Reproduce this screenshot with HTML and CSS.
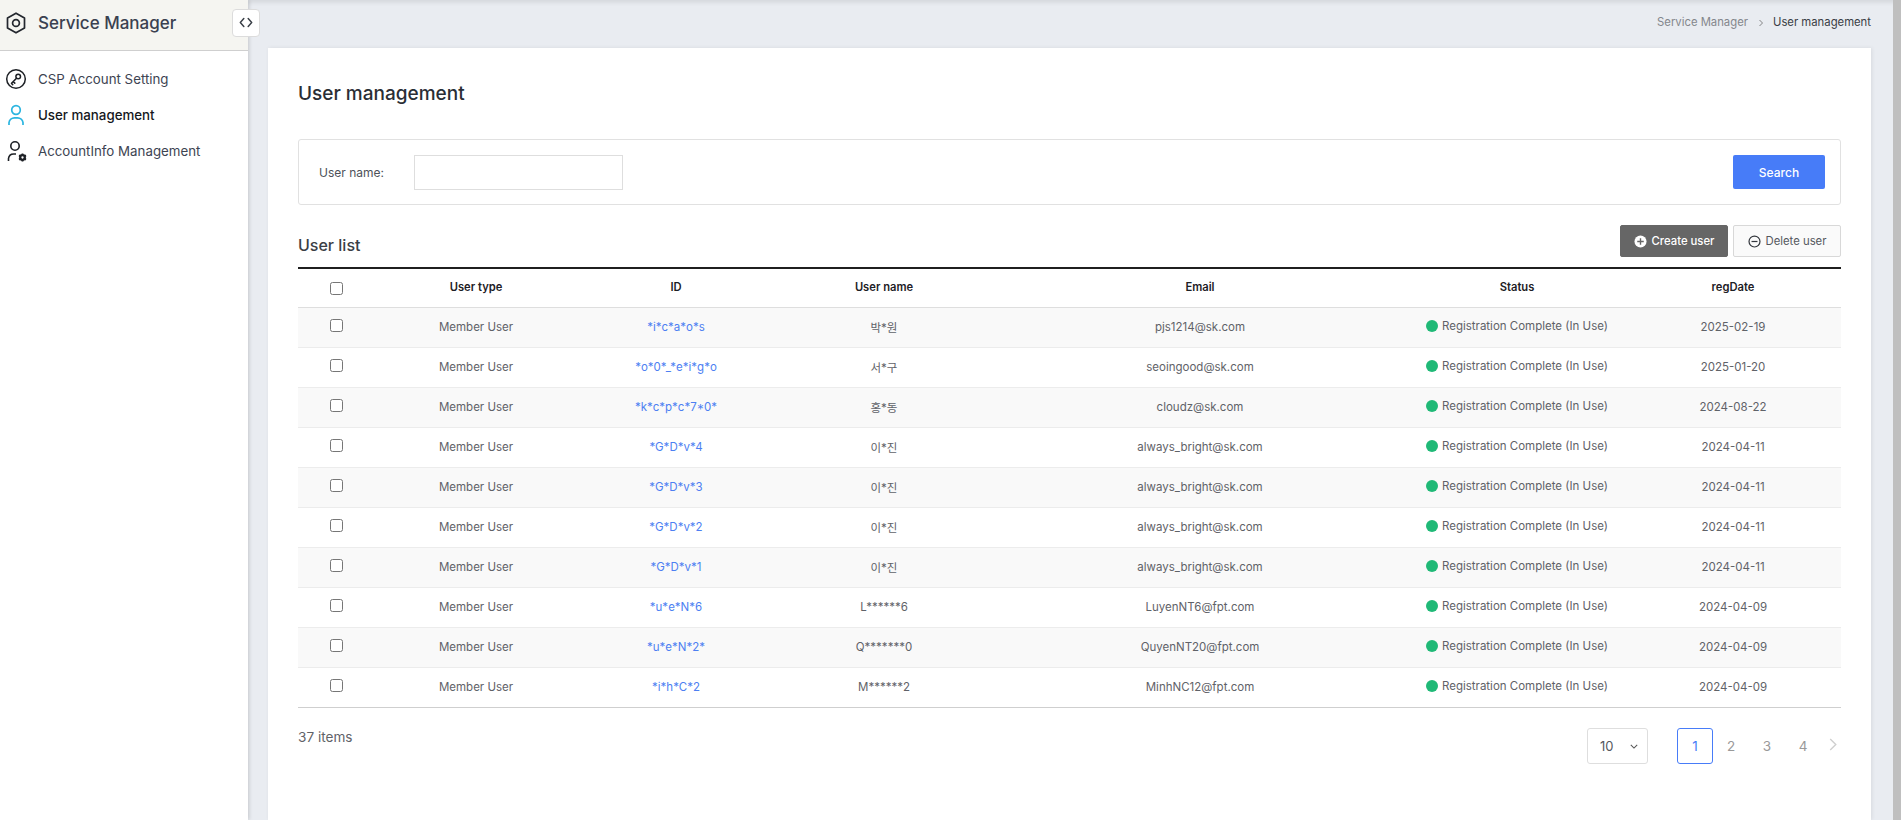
FILE: index.html
```html
<!DOCTYPE html>
<html lang="en">
<head>
<meta charset="utf-8">
<title>User management</title>
<link rel="stylesheet" href="styles.css">
</head>
<body>
<div class="app">
  <aside class="sidebar">
    <div class="brand">
      <svg class="brand-icon" viewBox="0 0 24 24" width="24" height="24" fill="none" stroke="#23272e" stroke-width="1.700"><path d="M12 2.200 20.500 7v10L12 21.800 3.500 17V7z" stroke-linejoin="round"/><circle cx="12" cy="12" r="3.400"/></svg>
      <span class="brand-name">Service Manager</span>
      <button class="toggle" type="button" aria-label="Toggle menu">
        <svg viewBox="0 0 16 12" width="14" height="11" fill="none" stroke="#3a3f47" stroke-width="1.700" stroke-linecap="round" stroke-linejoin="round"><path d="M5.500 1.500 1.500 6l4 4.500"/><path d="M10.500 1.500 14.500 6l-4 4.500"/></svg>
      </button>
    </div>
    <nav class="nav">
      <a class="nav-item">
        <svg viewBox="0 0 22 22" width="22" height="22" fill="none" stroke="#1d2025" stroke-width="1.500"><circle cx="11" cy="11" r="9.300"/><circle cx="13.200" cy="8.500" r="2.300"/><path d="M11.500 10.300 6.500 15.400M8.300 13.600l1.500 1.500M6.500 15.400l1.200 1.200" stroke-linecap="round"/></svg>
        <span>CSP Account Setting</span>
      </a>
      <a class="nav-item is-active">
        <svg viewBox="0 0 22 22" width="22" height="22" fill="none" stroke="#2bb5e0" stroke-width="1.700"><circle cx="11" cy="6" r="4.300"/><path d="M4 21v-2.500a5.500 5.500 0 0 1 5.500-4.700h3a5.500 5.500 0 0 1 5.500 4.700V21"/></svg>
        <span>User management</span>
      </a>
      <a class="nav-item">
        <svg viewBox="0 0 22 22" width="22" height="22" fill="none" stroke="#1d2025" stroke-width="1.600"><circle cx="10" cy="6" r="4.200"/><path d="M3.500 21v-2.500a5.200 5.200 0 0 1 5.200-4.500h2.300"/><circle cx="17.500" cy="17.500" r="2.300" stroke-width="2.300"/><path d="M17.500 13.400v1.600M17.500 20v1.600M14 15.400l1.400.8M19.600 18.800l1.400.8M14 19.600l1.400-.8M19.600 16.200l1.400-.8" stroke-width="1.800"/></svg>
        <span>AccountInfo Management</span>
      </a>
    </nav>
  </aside>

  <main class="main">
    <div class="crumbs">
      <span class="crumb-muted">Service Manager</span>
      <svg class="crumb-sep" viewBox="0 0 8 10" width="6" height="8" fill="none" stroke="#777" stroke-width="1.200"><path d="M2 1l4 4-4 4"/></svg>
      <span class="crumb-current">User management</span>
    </div>
    <section class="card">
      <h1 class="title">User management</h1>
      <form class="search">
        <label class="search-label" for="uname">User name:</label>
        <input class="search-input" id="uname" type="text">
        <button class="search-btn" type="button">Search</button>
      </form>
      <div class="list-head">
        <h2 class="list-title">User list</h2>
        <div class="actions">
          <button class="btn btn-dark" type="button">
            <svg viewBox="0 0 14 14" width="13" height="13"><circle cx="7" cy="7" r="6.500" fill="#fff"/><path d="M7 3.500v7M3.500 7h7" stroke="#666" stroke-width="1.500"/></svg>
            Create user
          </button>
          <button class="btn btn-light" type="button">
            <svg viewBox="0 0 14 14" width="13" height="13" fill="none" stroke="#33373d" stroke-width="1.300"><circle cx="7" cy="7" r="5.900"/><path d="M3.800 7h6.400"/></svg>
            Delete user
          </button>
        </div>
      </div>
      <table class="users">
        <colgroup>
          <col class="c-check"><col class="c-type"><col class="c-id"><col class="c-name"><col class="c-email"><col class="c-status"><col class="c-date">
        </colgroup>
        <thead>
          <tr><th><input class="check" type="checkbox"></th><th>User type</th><th class="id-col">ID</th><th>User name</th><th>Email</th><th>Status</th><th>regDate</th></tr>
        </thead>
        <tbody>
          <tr><td><input class="check" type="checkbox"></td><td>Member User</td><td class="link">*i*c*a*o*s</td><td>박*원</td><td>pjs1214@sk.com</td><td><span class="status"><i class="dot"></i>Registration Complete (In Use)</span></td><td>2025-02-19</td></tr>
          <tr><td><input class="check" type="checkbox"></td><td>Member User</td><td class="link">*o*0*_*e*i*g*o</td><td>서*구</td><td>seoingood@sk.com</td><td><span class="status"><i class="dot"></i>Registration Complete (In Use)</span></td><td>2025-01-20</td></tr>
          <tr><td><input class="check" type="checkbox"></td><td>Member User</td><td class="link">*k*c*p*c*7*0*</td><td>홍*동</td><td>cloudz@sk.com</td><td><span class="status"><i class="dot"></i>Registration Complete (In Use)</span></td><td>2024-08-22</td></tr>
          <tr><td><input class="check" type="checkbox"></td><td>Member User</td><td class="link">*G*D*v*4</td><td>이*진</td><td>always_bright@sk.com</td><td><span class="status"><i class="dot"></i>Registration Complete (In Use)</span></td><td>2024-04-11</td></tr>
          <tr><td><input class="check" type="checkbox"></td><td>Member User</td><td class="link">*G*D*v*3</td><td>이*진</td><td>always_bright@sk.com</td><td><span class="status"><i class="dot"></i>Registration Complete (In Use)</span></td><td>2024-04-11</td></tr>
          <tr><td><input class="check" type="checkbox"></td><td>Member User</td><td class="link">*G*D*v*2</td><td>이*진</td><td>always_bright@sk.com</td><td><span class="status"><i class="dot"></i>Registration Complete (In Use)</span></td><td>2024-04-11</td></tr>
          <tr><td><input class="check" type="checkbox"></td><td>Member User</td><td class="link">*G*D*v*1</td><td>이*진</td><td>always_bright@sk.com</td><td><span class="status"><i class="dot"></i>Registration Complete (In Use)</span></td><td>2024-04-11</td></tr>
          <tr><td><input class="check" type="checkbox"></td><td>Member User</td><td class="link">*u*e*N*6</td><td>L******6</td><td>LuyenNT6@fpt.com</td><td><span class="status"><i class="dot"></i>Registration Complete (In Use)</span></td><td>2024-04-09</td></tr>
          <tr><td><input class="check" type="checkbox"></td><td>Member User</td><td class="link">*u*e*N*2*</td><td>Q*******0</td><td>QuyenNT20@fpt.com</td><td><span class="status"><i class="dot"></i>Registration Complete (In Use)</span></td><td>2024-04-09</td></tr>
          <tr><td><input class="check" type="checkbox"></td><td>Member User</td><td class="link">*i*h*C*2</td><td>M******2</td><td>MinhNC12@fpt.com</td><td><span class="status"><i class="dot"></i>Registration Complete (In Use)</span></td><td>2024-04-09</td></tr>
        </tbody>
      </table>
      <div class="foot">
        <span class="count">37 items</span>
        <div class="pager">
          <div class="size">
            <span>10</span>
            <svg viewBox="0 0 10 6" width="8" height="5" fill="none" stroke="#555" stroke-width="1.300"><path d="M1 1l4 4 4-4"/></svg>
          </div>
          <div class="pages">
            <span class="page is-current">1</span>
            <span class="page">2</span>
            <span class="page">3</span>
            <span class="page">4</span>
            <svg class="next" viewBox="0 0 8 14" width="8" height="13" fill="none" stroke="#cfcfcf" stroke-width="1.500"><path d="M1 1l6 6-6 6"/></svg>
          </div>
        </div>
      </div>
    </section>
  </main>
  <div class="scrollbar"></div>
</div>
</body>
</html>
```

FILE: styles.css
```css
* { box-sizing: border-box; }
html, body { margin: 0; height: 100%; overflow: hidden; }
body {
  font-family: Inter, "Noto Sans CJK KR", "Liberation Sans", sans-serif;
  font-size: 11.5px;
  color: #5f6268;
  background: #e9ecf1;
}
.app { display: flex; height: 820px; }

.sidebar {
  flex: 0 0 248px;
  background: #fff;
  box-shadow: 1px 0 4px rgba(0, 0, 0, .16);
  position: relative;
  z-index: 2;
}
.brand {
  display: flex;
  align-items: center;
  height: 51px;
  padding-left: 4px;
  background: #f5f5f1;
  border-bottom: 1px solid #cfcfcf;
}
.brand-icon { margin-top: -5px; }
.brand-name {
  margin: -5px 0 0 10px;
  font-size: 17px;
  font-weight: 500;
  color: #3a4150;
  line-height: 24px;
}
.toggle {
  display: flex;
  align-items: center;
  justify-content: center;
  width: 28px;
  height: 28px;
  padding: 0;
  margin: -5px 0 0 auto;
  position: relative;
  left: 12px;
  background: #fff;
  border: 1px solid #dcdcdc;
  border-radius: 4px;
}
.nav { padding-top: 10px; }
.nav-item {
  display: flex;
  align-items: center;
  gap: 11px;
  height: 36px;
  padding-left: 5px;
  font-size: 13.3px;
  color: #3d4452;
}
.nav-item.is-active { color: #14171c; font-weight: 500; }

.main { flex: 1; min-width: 0; padding: 0 22px 0 20px; box-shadow: inset 0 6px 5px -4px rgba(0, 0, 0, .1); }
.crumbs {
  display: flex;
  align-items: center;
  justify-content: flex-end;
  height: 48px;
  padding-bottom: 4px;
  font-size: 11.3px;
}
.crumb-muted { color: #84878c; }
.crumb-sep { margin: 1px 9px 0 10px; }
.crumb-current { color: #3a3e45; }

.card {
  height: 772px;
  padding: 33px 30px 0;
  background: #fff;
  box-shadow: 1px 0 4px rgba(0, 0, 0, .08);
}
.title {
  margin: 0;
  font-size: 19px;
  line-height: 26px;
  font-weight: 500;
  color: #2a2e35;
}
.search {
  display: flex;
  align-items: center;
  height: 66px;
  margin-top: 32px;
  padding: 0 15px 0 20px;
  border: 1px solid #e1e1e1;
  border-radius: 3px;
}
.search-label { width: 95px; font-size: 12px; color: #4e525a; }
.search-input {
  width: 209px;
  height: 35px;
  border: 1px solid #dedede;
  background: #fff;
  outline: none;
}
.search-btn {
  width: 92px;
  height: 34px;
  margin-left: auto;
  border: 0;
  border-radius: 2px;
  background: #477cf8;
  color: #fff;
  font: 500 12px Inter, sans-serif;
}
.list-head {
  display: flex;
  justify-content: space-between;
  align-items: flex-start;
  height: 62px;
  padding-top: 20px;
}
.list-title {
  margin: 8px 0 0;
  font-size: 16px;
  line-height: 24px;
  font-weight: 500;
  color: #3a3e45;
}
.actions { display: flex; gap: 5px; }
.btn {
  display: flex;
  align-items: center;
  justify-content: center;
  gap: 5px;
  width: 108px;
  height: 32px;
  padding: 0;
  border-radius: 2px;
  font: 11.3px Inter, sans-serif;
}
.btn-dark { background: #666; border: 1px solid #666; color: #fff; font-weight: 500; }
.btn-light { background: #fafafa; border: 1px solid #d8d8d8; color: #55585e; }

.users {
  width: 1543px;
  table-layout: fixed;
  border-collapse: separate;
  border-spacing: 0;
  border-top: 2px solid #1f1f1f;
  border-bottom: 1px solid #cfcfcf;
}
.c-check { width: 63px; }
.c-type { width: 230px; }
.c-id { width: 186px; }
.c-name { width: 214px; }
.c-email { width: 418px; }
.c-status { width: 216px; }
.c-date { width: 216px; }
.users th {
  height: 39px;
  padding: 0 0 2px;
  font-weight: 600;
  font-size: 11.2px;
  color: #1d2025;
  border-bottom: 1px solid #dedede;
}
.users td {
  height: 40px;
  padding: 0 0 2px;
  text-align: center;
  border-bottom: 1px solid #ececec;
}
.users tbody tr:nth-child(odd) { background: #f9f9f9; }
.users tbody tr:last-child td { height: 39px; padding-bottom: 1px; border-bottom: 0; }
.users .link { color: #4d7ff2; padding-right: 16px; }
.users .id-col { padding-right: 16px; }
.users th .check { margin: 2px 0 0 13px; }
.users td .check { margin: 0 0 3px 13px; }
.check {
  width: 13px;
  height: 13px;
  vertical-align: middle;
}
.status { display: inline-flex; align-items: center; gap: 4px; }
.dot { width: 12px; height: 12px; border-radius: 50%; background: #20b977; }

.foot {
  display: flex;
  justify-content: space-between;
  align-items: flex-start;
  padding-top: 20px;
}
.count { font-size: 13.6px; line-height: 18px; color: #5f6268; }
.pager { display: flex; align-items: center; margin-right: 4px; }
.size {
  display: flex;
  align-items: center;
  justify-content: space-between;
  width: 61px;
  height: 36px;
  padding: 0 9px 0 12px;
  border: 1px solid #dedede;
  border-radius: 3px;
  font-size: 13px;
  color: #55585e;
}
.pages { display: flex; align-items: center; margin-left: 29px; }
.page {
  display: flex;
  align-items: center;
  justify-content: center;
  width: 36px;
  height: 36px;
  font-size: 13.5px;
  color: #999;
}
.page.is-current {
  border: 1px solid #477cf8;
  border-radius: 3px;
  color: #477cf8;
}
.next { margin: -4px 0 0 8px; }
.scrollbar { flex: 0 0 8px; background: #bfbfbf; }
```
